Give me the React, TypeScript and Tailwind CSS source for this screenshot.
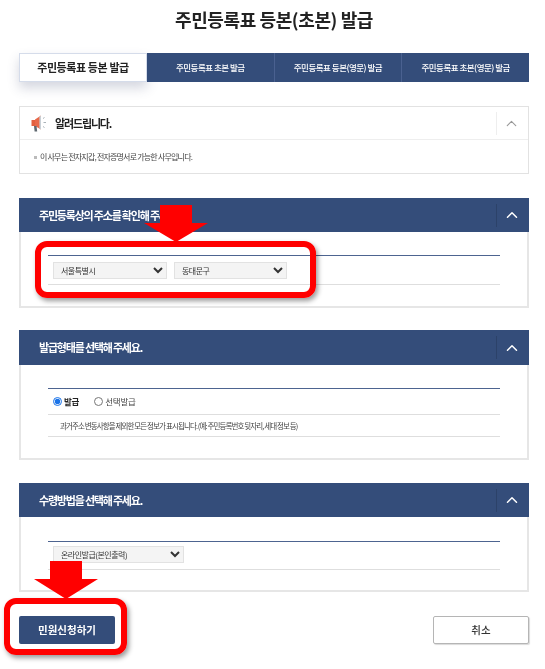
import { ReactNode } from 'react';
import { ChevronUp } from 'lucide-react';

const NAVY = 'bg-[#344d7a]';

const tabs = ['주민등록표 초본 발급', '주민등록표 등본(영문) 발급', '주민등록표 초본(영문) 발급'];

const Megaphone = () => (
  <svg width="16" height="17" viewBox="0 0 16 17" className="shrink-0">
    <path d="M0.5 5 L4 5 L4 11 L0.5 11 Z" fill="#e2603f" />
    <path d="M4 4.6 L10 0.6 L10 14.6 L4 11 Z" fill="#e8694a" />
    <path d="M8.4 2 L10 0.6 L10 14.6 L8.4 13.4 Z" fill="#c9d0d6" />
    <path d="M3 11 L5.5 11 L6.2 16.5 L3.6 16.5 Z" fill="#5f6870" />
    <path d="M12 3.5 L13.5 2.5 M12.5 7.5 L15 7.5 M12 11.5 L13.5 12.5" stroke="#aab2b8" strokeWidth="1" />
  </svg>
);

const Panel = ({ title, head, body, children }: { title: string; head: string; body: string; children: ReactNode }) => (
  <section className="border-2 border-t-0 border-[#e6e6e6]">
    <div className={`${NAVY} ${head} -mx-[2px] flex items-center pl-[20px] pr-[8px]`}>
      <h2 className="flex-1 text-[11px] font-bold tracking-[-1.2px] text-white">{title}</h2>
      <span className="h-[23px] w-px bg-[#2c4269]" />
      <ChevronUp size={18} className="ml-[6px] text-white" />
    </div>
    <div className={`px-[27px] ${body}`}>
      <div className="border-t border-[#4d6490]">{children}</div>
    </div>
  </section>
);

const Row = ({ children }: { children: ReactNode }) => (
  <div className="border-b border-[#dedede]">{children}</div>
);

const Select = ({ label, width }: { label: string; width: string }) => (
  <select className={`${width} h-[17px] border border-[#e2e2e2] bg-[#f4f4f4] pl-[3px] text-[8px] tracking-[-0.5px] text-[#333]`} defaultValue={label}>
    <option>{label}</option>
  </select>
);

export default function App() {
  return (
    <div className="relative min-h-[669px] overflow-hidden bg-white font-['Noto_Sans_CJK_KR','Noto_Sans',sans-serif] text-[#222]">
      <div className="pl-[19px] pr-[16px] blur-[0.3px]">
        <h1 className="flex h-[53px] items-center justify-center pb-[15px] text-[18px] font-bold tracking-[-0.4px] text-[#222]">
          주민등록표 등본(초본) 발급
        </h1>

        {/* 탭 */}
        <div className="flex h-[29px]">
          <div className="flex w-[128px] items-center justify-center border border-[#d5dcea] bg-white text-[11px] font-bold tracking-[-0.4px] shadow-[0_6px_12px_rgba(60,70,110,0.22)]">
            주민등록표 등본 발급
          </div>
          {tabs.map((tab, i) => (
            <div
              key={tab}
              className={`${NAVY} flex flex-1 items-center justify-center text-[8.5px] font-medium tracking-[-0.5px] text-white ${i > 0 ? 'border-l border-[#4a6190]' : ''}`}
            >
              {tab}
            </div>
          ))}
        </div>

        {/* 알려드립니다 */}
        <section className="mt-[24px] h-[68px] border border-[#e2e2e2]">
          <div className="flex h-[33px] items-center border-b border-[#eeeeee] pl-[11px] pr-[8px]">
            <Megaphone />
            <h2 className="ml-[8px] flex-1 text-[11px] font-bold tracking-[-1.15px] text-[#222]">알려드립니다.</h2>
            <span className="h-[23px] w-px bg-[#eeeeee]" />
            <ChevronUp size={17} strokeWidth={1.5} className="ml-[6px] text-[#999]" />
          </div>
          <p className="flex items-center pl-[14px] pt-[11px] text-[8px] leading-[12px] tracking-[-0.8px] text-[#444]">
            <span className="mr-[3px] h-[3px] w-[3px] bg-[#bbb]" />
            이 사무는 전자지갑, 전자증명서로 가능한 사무입니다.
          </p>
        </section>

        <div className="mt-[24px]">
          <Panel title="주민등록상의 주소를 확인해 주세요." head="h-[34px]" body="pt-[23px] pb-[21px]">
            <Row>
              <div className="flex gap-[7px] pb-[5px] pl-[5px] pt-[6px]">
                <Select label="서울특별시" width="w-[114px]" />
                <Select label="동대문구" width="w-[113px]" />
              </div>
            </Row>
          </Panel>
        </div>

        <div className="mt-[22px]">
          <Panel title="발급형태를 선택해 주세요." head="h-[35px]" body="pt-[23px] pb-[21px]">
            <Row>
              <div className="flex h-[25px] items-center px-[5px] text-[8.5px] tracking-[-0.2px]">
                <input type="radio" name="kind" defaultChecked className="h-[9px] w-[9px] accent-[#1a73e8]" />
                <label className="ml-[2px] font-bold">발급</label>
                <input type="radio" name="kind" className="ml-[15px] h-[9px] w-[9px]" />
                <label className="ml-[2px] text-[#444]">선택발급</label>
              </div>
            </Row>
            <Row>
              <p className="flex h-[21px] items-center pl-[12px] text-[7.5px] tracking-[-0.9px] text-[#444]">
                과거주소 변동사항을 제외한 모든 정보가 표시됩니다. (예: 주민등록번호 뒷자리, 세대 정보 등)
              </p>
            </Row>
          </Panel>
        </div>

        <div className="mt-[23px]">
          <Panel title="수령방법을 선택해 주세요." head="h-[34px]" body="pt-[24px] pb-[20px]">
            <Row>
              <div className="flex pb-[6px] pl-[5px] pt-[4px]">
                <Select label="온라인발급(본인출력)" width="w-[131px]" />
              </div>
            </Row>
          </Panel>
        </div>

        <div className="mt-[24px] flex justify-between">
          <button className={`${NAVY} h-[28px] w-[96px] rounded-[2px] text-[10.5px] font-bold text-white`}>민원신청하기</button>
          <button className="h-[28px] w-[96px] rounded-[2px] border border-[#b5b5b5] bg-white text-[10.5px] font-medium text-[#333] shadow-[1px_1px_1px_rgba(0,0,0,0.15)]">취소</button>
        </div>
      </div>

      {/* 강조 표시 */}
      <div className="absolute left-[35px] top-[241px] h-[57px] w-[281px] rounded-[12px] border-[6px] border-[#ff0000] shadow-[2px_3px_5px_rgba(0,0,0,0.4)]" />
      <div className="absolute left-[4px] top-[598px] h-[57px] w-[123px] rounded-[12px] border-[6px] border-[#ff0000] shadow-[2px_3px_5px_rgba(0,0,0,0.4)]" />
      <svg width="64" height="37" viewBox="0 0 64 37" className="absolute left-[144px] top-[205px]">
        <path d="M16 0 H48 V18 H64 L32 37 L0 18 H16 Z" fill="#ff0000" />
      </svg>
      <svg width="64" height="38" viewBox="0 0 64 38" className="absolute left-[34px] top-[561px]">
        <path d="M16 0 H48 V18 H64 L32 38 L0 18 H16 Z" fill="#ff0000" />
      </svg>
    </div>
  );
}
